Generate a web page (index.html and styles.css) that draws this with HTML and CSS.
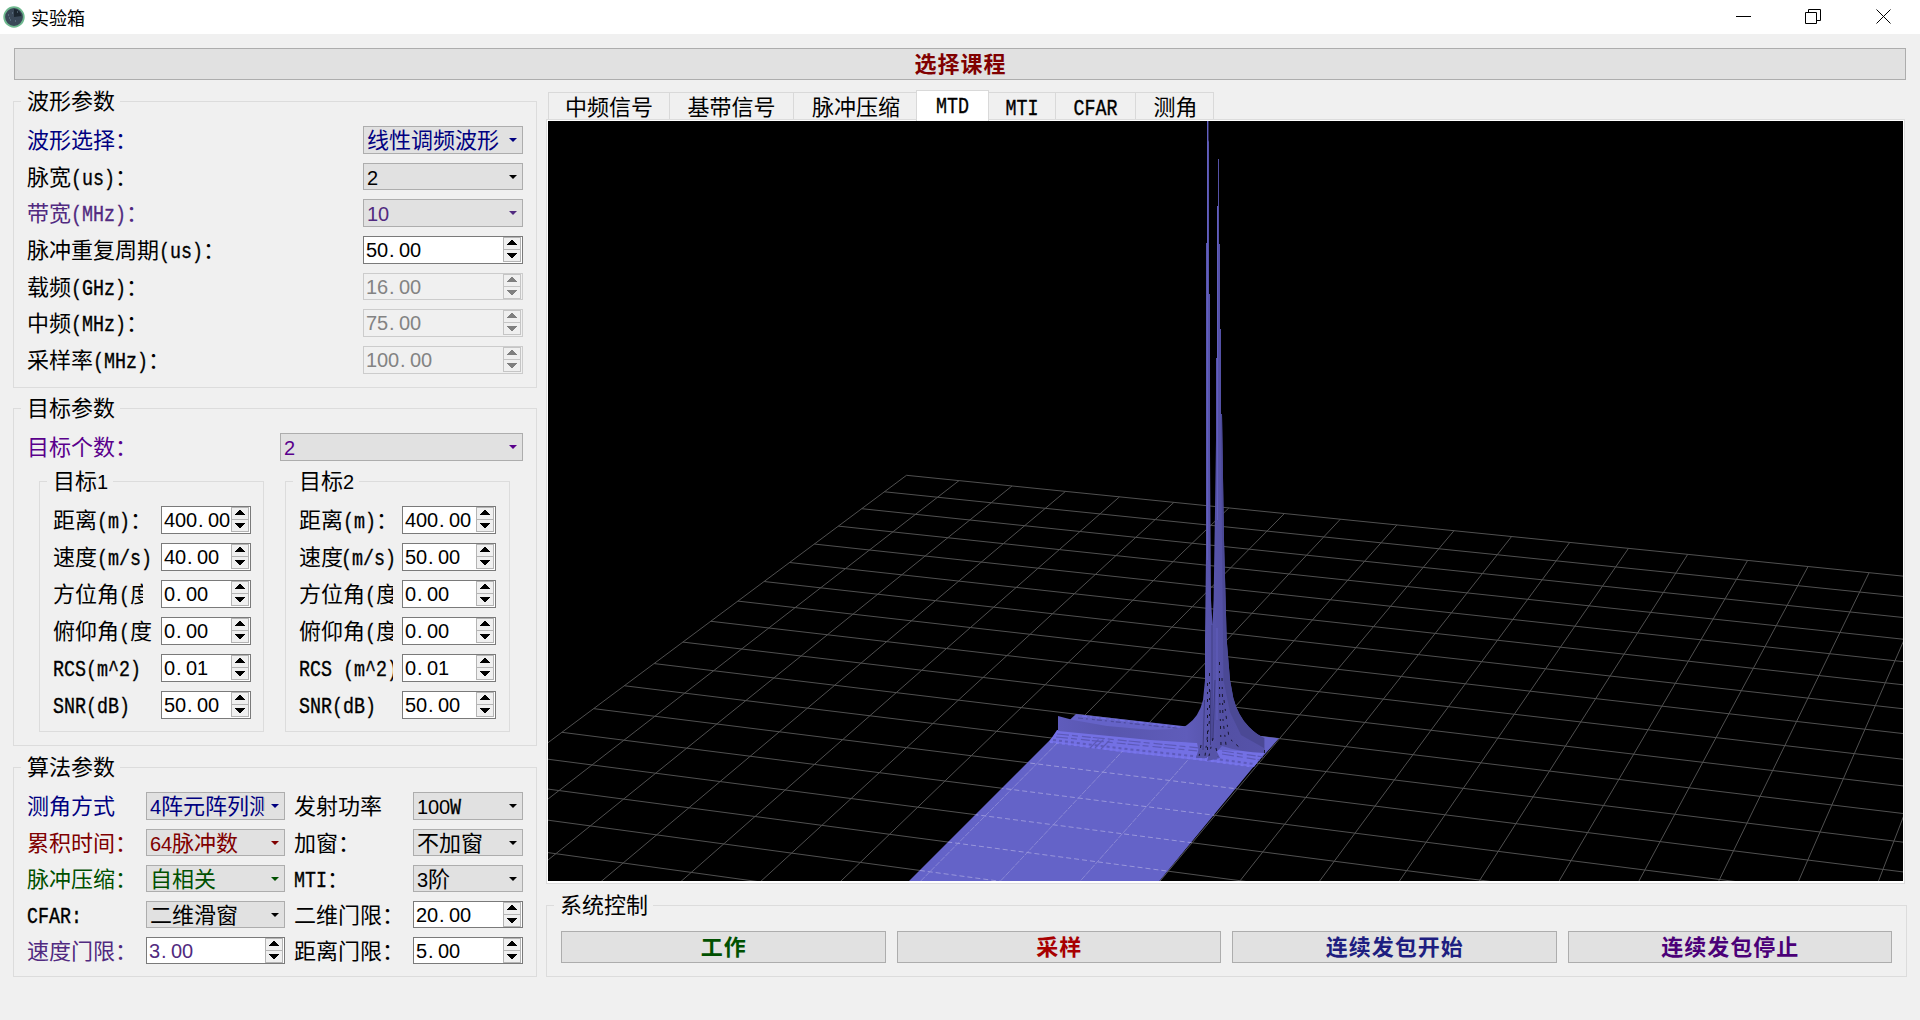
FILE: index.html
```html
<!DOCTYPE html>
<html lang="zh-CN">
<head>
<meta charset="utf-8">
<title>实验箱</title>
<link rel="stylesheet" href="styles.css">
</head>
<body>
<svg class="defs" aria-hidden="true">
  <symbol id="steps" viewBox="0 0 18 25">
    <rect x=".5" y=".5" width="17" height="24" fill="#f0f0f0" stroke="#b4b4b4"/>
    <path d="M0 12.5h18" stroke="#b4b4b4"/>
    <path d="M4 8h10v-1h-1v-1h-1v-1h-1v-1h-1v-1h-2v1h-1v1h-1v1h-1v1h-1z" fill="currentColor"/>
    <path d="M4 16h10v1h-1v1h-1v1h-1v1h-1v1h-2v-1h-1v-1h-1v-1h-1v-1h-1z" fill="currentColor"/>
  </symbol>
</svg>

<header class="titlebar">
  <svg class="app-icon" width="22" height="22" viewBox="0 0 22 22"><circle cx="11" cy="11" r="9.8" fill="#3a4858" stroke="#6fb98f" stroke-width="1.8"/><path d="M11 11V3a8 8 0 0 1 7.500 7z" fill="#1c2630"/><path d="M5 9h1M7 14h1M9 7h1M14 6h1M12 15h1M6 12h1" stroke="#71899a"/></svg>
  <span class="title">实验箱</span>
  <svg class="win" width="160" height="16" viewBox="0 0 160 16" fill="none" stroke="#000"><path d="M0 7.500h15M69.500 3.500h11v11h-11zM72.500 3.500v-3h12v11h-4M140.500 .5l14 14M154.500 .5l-14 14"/></svg>
</header>

<main class="body">
  <button class="push course">选择课程</button>
  <div class="cols">
    <section class="left">
      <fieldset class="group waveform">
        <legend>波形参数</legend>
        <div class="rows">
          <label class="navy">波形选择：</label><div class="combo navy">线性调频波形</div>
          <label>脉宽<span class="la">(us)</span>：</label><div class="combo"><span class="num">2</span></div>
          <label class="violet">带宽<span class="la">(MHz)</span>：</label><div class="combo violet"><span class="num">10</span></div>
          <label>脉冲重复周期<span class="la">(us)</span>：</label><div class="spin"><span class="num">50<b>.</b>00</span><svg><use href="#steps"/></svg></div>
          <label>载频<span class="la">(GHz)</span>：</label><div class="spin off"><span class="num">16<b>.</b>00</span><svg><use href="#steps"/></svg></div>
          <label>中频<span class="la">(MHz)</span>：</label><div class="spin off"><span class="num">75<b>.</b>00</span><svg><use href="#steps"/></svg></div>
          <label>采样率<span class="la">(MHz)</span>：</label><div class="spin off"><span class="num">100<b>.</b>00</span><svg><use href="#steps"/></svg></div>
        </div>
      </fieldset>

      <fieldset class="group target">
        <legend>目标参数</legend>
        <div class="count"><label class="purple">目标个数：</label><div class="combo purple"><span class="num">2</span></div></div>
        <div class="targets">
          <fieldset class="group sub t1">
            <legend>目标<span class="num">1</span></legend>
            <div class="rows">
              <label>距离<span class="la">(m)</span>：</label><div class="spin"><span class="num">400<b>.</b>00</span><svg><use href="#steps"/></svg></div>
              <label>速度<span class="la">(m/s)</span></label><div class="spin"><span class="num">40<b>.</b>00</span><svg><use href="#steps"/></svg></div>
              <label class="cut short">方位角<span class="la">(</span>度</label><div class="spin"><span class="num">0<b>.</b>00</span><svg><use href="#steps"/></svg></div>
              <label>俯仰角<span class="la">(</span>度</label><div class="spin"><span class="num">0<b>.</b>00</span><svg><use href="#steps"/></svg></div>
              <label><span class="la">RCS(m^2)</span></label><div class="spin"><span class="num">0<b>.</b>01</span><svg><use href="#steps"/></svg></div>
              <label><span class="la">SNR(dB)</span></label><div class="spin"><span class="num">50<b>.</b>00</span><svg><use href="#steps"/></svg></div>
            </div>
          </fieldset>
          <fieldset class="group sub t2">
            <legend>目标<span class="num">2</span></legend>
            <div class="rows">
              <label>距离<span class="la">(m)</span>：</label><div class="spin"><span class="num">400<b>.</b>00</span><svg><use href="#steps"/></svg></div>
              <label class="snug">速度<span class="la">(m/s)</span></label><div class="spin"><span class="num">50<b>.</b>00</span><svg><use href="#steps"/></svg></div>
              <label class="cut">方位角<span class="la">(</span>度</label><div class="spin"><span class="num">0<b>.</b>00</span><svg><use href="#steps"/></svg></div>
              <label class="cut">俯仰角<span class="la">(</span>度</label><div class="spin"><span class="num">0<b>.</b>00</span><svg><use href="#steps"/></svg></div>
              <label class="cut"><span class="la">RCS (m^2)</span></label><div class="spin"><span class="num">0<b>.</b>01</span><svg><use href="#steps"/></svg></div>
              <label><span class="la">SNR(dB)</span></label><div class="spin"><span class="num">50<b>.</b>00</span><svg><use href="#steps"/></svg></div>
            </div>
          </fieldset>
        </div>
      </fieldset>

      <fieldset class="group algo">
        <legend>算法参数</legend>
        <div class="rows">
          <label class="navy">测角方式</label><div class="combo navy"><span class="val"><span class="num">4</span>阵元阵列测</span></div>
          <label class="second">发射功率</label><div class="combo"><span class="num">100</span><span class="la">W</span></div>
          <label class="red">累积时间：</label><div class="combo red"><span class="num">64</span>脉冲数</div>
          <label class="second">加窗：</label><div class="combo">不加窗</div>
          <label class="green">脉冲压缩：</label><div class="combo green">自相关</div>
          <label class="second"><span class="la">MTI</span>：</label><div class="combo"><span class="num">3</span>阶</div>
          <label><span class="la">CFAR:</span></label><div class="combo">二维滑窗</div>
          <label class="second">二维门限：</label><div class="spin"><span class="num">20<b>.</b>00</span><svg><use href="#steps"/></svg></div>
          <label class="violet">速度门限：</label><div class="spin violet"><span class="num">3<b>.</b>00</span><svg><use href="#steps"/></svg></div>
          <label class="second">距离门限：</label><div class="spin"><span class="num">5<b>.</b>00</span><svg><use href="#steps"/></svg></div>
        </div>
      </fieldset>
    </section>

    <section class="right">
      <nav class="tabs">
        <span class="tab w1">中频信号</span><span class="tab w2">基带信号</span><span class="tab w3">脉冲压缩</span><span class="tab active"><span class="la">MTD</span></span><span class="tab w5"><span class="la">MTI</span></span><span class="tab w6"><span class="la">CFAR</span></span><span class="tab w7">测角</span>
      </nav>
      <div class="pane">
        <svg class="scene" viewBox="548 121 1355 760">
          <defs>
            <clipPath id="floorClip"><path d="M1049 742L1253 768L1159 882H908z"/></clipPath>
            <linearGradient id="ridge" gradientUnits="userSpaceOnUse" x1="1058" y1="0" x2="1265" y2="0"><stop offset="0" stop-color="#5f5cbc"/><stop offset=".25" stop-color="#5856ae"/><stop offset=".62" stop-color="#5f5cba"/><stop offset=".8" stop-color="#5350a4"/><stop offset="1" stop-color="#5653aa"/></linearGradient>
          </defs>
          <g id="grid" class="grid"></g>
          <path class="floor" d="M1076 714L1187 726.500L1279 738.300L1251.700 769L1158.500 882H908L1049 741L1058 731z"/>
          <path class="strip" d="M1057 730L1197 743L1220 750L1265 752L1254 767L1197 760L1122 752L1049 742z"/>
          <g class="ripple">
            <path class="fine" d="M1078 718L1185 729"/>
            <path class="fine pale" d="M1082 716L1180 727"/>
            <path class="lo" d="M1057 734L1200 748M1056 737L1198 751M1222 751L1263 757M1222 754L1260 760"/>
            <path class="crest" d="M1053 740L1122 748.500L1197 756.500L1254 764"/>
            <path class="crest lit" d="M1050 742L1122 751L1197 759L1252 766.500"/>
            <path class="lo" d="M1090 748l10-10M1095 748l10-10M1101 749l10-10"/>
          </g>
          <path fill="url(#ridge)" d="M1058 716L1073 720L1107 726L1150 729.700L1173 729Q1183 728 1187 725Q1199 717 1203 700L1205 680L1205 640L1206 553V243H1207V121H1208.500V140L1209 142V294H1210V450L1211 600L1212.500 625L1213.600 600L1215 510L1216 440V358H1217V206H1218V159H1219V244H1220V329H1221V414H1222L1224 540L1226.700 640L1230 680L1233.300 698Q1238 716 1249 727Q1257 735 1264.700 738V753Q1240 752 1222 746L1212 757L1200 757L1197 743L1150 740L1058 731z"/>
          <path class="shade" d="M1221 414L1222 540L1223.500 680L1230 712L1241 735L1264 748V738Q1257 735 1249 727Q1238 716 1233.300 698L1230 680L1226.700 640L1224 540L1222 414z"/>
          <path class="mound" d="M1199 748h7l1 10h-11zM1213 744l7 14l-13 3z"/>
          <path class="glow" d="M1207.500 121V560M1217.500 206V520M1217 628V720"/>
          <path class="crease" d="M1212 625V740M1210.500 690V745M1204.500 700L1203 750M1215 680L1213 740"/>
          <path class="holes" d="M1209.500 673V720L1205 756M1207.500 683V750M1219.500 662V690L1221 745M1222 678L1223 720L1226 745M1224 700L1229 738L1240 748M1213 738L1209 756M1201 745L1199 757M1216 748L1218 757M1264.500 750V754"/>
          <g id="overlay" class="overlay" clip-path="url(#floorClip)"></g>
        </svg>
      </div>
      <fieldset class="group control">
        <legend>系统控制</legend>
        <div class="buttons">
          <button class="push green">工作</button>
          <button class="push crimson">采样</button>
          <button class="push indigo">连续发包开始</button>
          <button class="push deep">连续发包停止</button>
        </div>
      </fieldset>
    </section>
  </div>
</main>
<script src="scene.js"></script>
</body>
</html>
```
FILE: styles.css
```css
* { box-sizing: border-box; }
body {
  margin: 0;
  width: 1920px;
  height: 1020px;
  overflow: hidden;
  background: #f0f0f0;
  color: #000;
  font: 22px/24px "Noto Sans CJK SC", sans-serif;
}
.defs { display: none; }

.titlebar {
  display: flex;
  align-items: center;
  height: 34px;
  padding: 0 24px 0 3px;
  background: #fff;
}
.title { margin-left: 6px; font-size: 18px; }
.win { margin-left: auto; margin-bottom: 1px; }

.body { display: flex; flex-direction: column; padding: 14px 14px 0; }
.push {
  height: 32px;
  padding: 0 0 4px 1px;
  border: 1px solid #adadad;
  border-radius: 0;
  background: #e1e1e1;
  font: bold 22px/26px "Noto Sans CJK SC", sans-serif;
  letter-spacing: 1px;
}
.course { color: #800000; }
.cols { display: flex; gap: 9px; margin: 0 -1px; }
.left { width: 524px; margin-top: 7px; }
.right { width: 1361px; margin-top: 10px; }

/* group boxes */
.group {
  min-width: 0;
  margin: 0;
  padding: 10px 13px 13px;
  border: 1px solid #dcdcdc;
}
legend {
  height: 29px;
  margin-left: -6px;
  padding: 0 5px 0 6px;
  line-height: 25px;
}
.target { margin-top: 6px; }
.algo { margin-top: 7px; padding-bottom: 12px; }
.rows { display: grid; row-gap: 9px; }
.waveform .rows {
  grid-template-columns: 1fr 160px;
  grid-template-rows: 28px 27px 28px 28px 27px 28px 28px;
}
.algo .rows {
  grid-template-columns: 119px 139px 128px 110px;
  grid-template-rows: 28px 27px 27px 27px 27px;
}
.second { padding-left: 9px; }
.count { display: grid; grid-template-columns: 253px 243px; height: 28px; }
.targets { display: flex; gap: 21px; margin-top: 6px; padding-left: 12px; }
.sub { flex: 0 0 225px; padding-bottom: 12px; }
.sub .rows { grid-auto-rows: 28px; }
.t1 .rows { grid-template-columns: 108px 90px; }
.t2 .rows { grid-template-columns: 103px 94px; }
label { white-space: nowrap; }
.sub .cut { margin-right: 9px; overflow-x: clip; overflow-y: visible; }
.t1 .short { margin-right: 18px; }
.snug .la { margin-left: -2px; }

/* half-width runs: every character takes an 11px cell */
.num {
  font-family: "Liberation Sans", sans-serif;
  font-size: 20px;
  line-height: 20px;
  letter-spacing: -0.12px;
  vertical-align: 0.5px;
}
.num b { font-weight: normal; padding-left: 1px; letter-spacing: 4.44px; }
.la {
  display: inline-block;
  font-family: "Liberation Mono", monospace;
  font-size: 18.33px;
  line-height: 18px;
  vertical-align: 0.5px;
  white-space: pre;
  transform: scaleY(1.18);
  transform-origin: 0 76.700%;
  -webkit-text-stroke: 0.3px currentColor;
}

.combo, .spin { position: relative; white-space: nowrap; }
.combo {
  padding-left: 3px;
  border: 1px solid #adadad;
  background: #e1e1e1;
  line-height: 22px;
}
.combo::after {
  content: "";
  position: absolute;
  right: 5px;
  top: 11px;
  border: 4px solid transparent;
  border-top-color: currentColor;
  border-bottom: 0;
}
.val { display: block; width: 115px; overflow-x: clip; overflow-y: visible; }
.spin {
  display: flex;
  justify-content: space-between;
  padding-left: 2px;
  border: 1px solid #7a7a7a;
  background: #fff;
}
.spin .num { line-height: 26px; }
.spin svg { flex: none; width: 18px; height: 25px; margin-right: 1px; color: #000; }
.off { border-color: #ccc; background: #f0f0f0; color: #838383; }
.off svg { color: #505050; opacity: .7; }

.navy { color: #000080; }
.violet { color: #512a80; }
.purple { color: #5a008c; }
.red { color: #800000; }
.green { color: #005000; }
.crimson { color: #a80000; }
.indigo { color: #1e1e80; }
.deep { color: #4b0078; }

/* tabs and plot */
.tabs { display: flex; align-items: flex-end; height: 29px; padding-left: 2px; }
.tab {
  height: 27px;
  border: 1px solid #d9d9d9;
  border-width: 1px 0 0 1px;
  line-height: 24px;
  text-align: center;
}
.w1 { width: 121px; }
.w2 { width: 124px; }
.w3 { width: 123px; padding-left: 2px; }
.w5 { width: 66px; border-left: 0; }
.w6 { width: 80px; }
.w7 { width: 79px; padding-left: 2px; border-right-width: 1px; }
.active {
  position: relative;
  width: 73px;
  height: 31px;
  margin-bottom: -2px;
  border-right-width: 1px;
  background: #fff;
}
.pane {
  width: 1359px;
  height: 765px;
  padding: 1px;
  border: 1px solid #dcdcdc;
  background: #fff;
}
.scene { display: block; width: 1355px; height: 760px; background: #000; }
.grid { stroke: #505050; stroke-width: 1; }
.floor { fill: #6563c8; }
.strip { fill: #7370e4; }
.ripple { fill: none; stroke-width: 1.2; }
.fine { stroke: #4f4da0; stroke-dasharray: 5 3 2 4 3 2; }
.pale { stroke: #7471e6; }
.lo { stroke: #5c59b8; stroke-dasharray: 12 3 6 4 9 2; }
.crest { stroke: #5d5abb; stroke-width: 2; stroke-dasharray: 3 3; }
.lit { stroke: #7875ec; }
.shade { fill: #4b4995; }
.mound { fill: #5654a8; }
.glow { fill: none; stroke: #6562c4; stroke-width: .8; }
.crease { fill: none; stroke: #403e82; }
.holes { fill: none; stroke: #17162f; stroke-width: 1; stroke-dasharray: 3 6 2 5; }
.overlay { stroke: #a5a3e0; stroke-width: 1; opacity: .8; }
.overlay .across { stroke-dasharray: 5 3; }
.overlay .along { stroke-dasharray: 6 1; opacity: .7; }

.control { margin-top: 7px; padding: 11px 14px 13px; }
.control legend { margin-left: -7px; }
.buttons { display: grid; grid-template-columns: repeat(4, 1fr); gap: 11px; }
```
FILE: scene.js
```js
// Ground grid: 20 x 20 cells projected with the camera's perspective.
const N = 20;

function project(i, j) {
  const w = 1 - 0.004514 * i - 0.013722 * j;
  return [
    (906.5 + 48.186 * i - 34.218 * j) / w,
    (475.3 + 3.144 * i + 9.721 * j) / w
  ];
}

function addLine(parent, a, b, name) {
  const line = document.createElementNS('http://www.w3.org/2000/svg', 'line');
  line.setAttribute('x1', a[0]);
  line.setAttribute('y1', a[1]);
  line.setAttribute('x2', b[0]);
  line.setAttribute('y2', b[1]);
  line.setAttribute('class', name);
  parent.appendChild(line);
}

for (const id of ['grid', 'overlay']) {
  const group = document.getElementById(id);
  for (let k = 0; k <= N; k++) {
    addLine(group, project(k, 0), project(k, N), 'along');
    addLine(group, project(0, k), project(N, k), 'across');
  }
}
```
